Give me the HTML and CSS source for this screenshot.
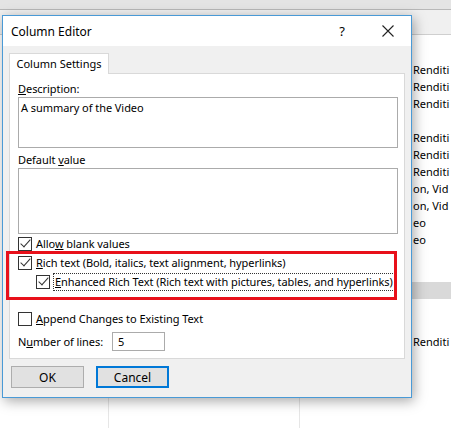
FILE: index.html
```html
<!DOCTYPE html>
<html lang="en">
<head>
    <meta charset="UTF-8">
    <title>Column Editor</title>
    <link rel="stylesheet" href="styles.css">
</head>
<body>
    <!-- list view behind the dialog -->
    <div class="app">
        <div class="ribbon"></div>
        <div class="header-row"></div>
        <div class="grid">
            <div class="col col-a"></div>
            <div class="col col-b"></div>
            <div class="col col-c">
                <div class="cell">Renditi</div>
                <div class="cell">Renditi</div>
                <div class="cell">Renditi</div>
                <div class="cell"></div>
                <div class="cell">Renditi</div>
                <div class="cell">Renditi</div>
                <div class="cell">Renditi</div>
                <div class="cell">on, Vid</div>
                <div class="cell">on, Vid</div>
                <div class="cell">eo</div>
                <div class="cell">eo</div>
                <div class="cell"></div>
                <div class="cell"></div>
                <div class="cell selected"></div>
                <div class="cell"></div>
                <div class="cell"></div>
                <div class="cell">Renditi</div>
            </div>
        </div>
    </div>

    <div class="dialog">
        <div class="titlebar">
            <span class="title">Column Editor</span>
            <span class="help">?</span>
            <svg class="close" width="12" height="12" viewBox="0 0 12 12">
                <path d="M0.5 0.5 L11.5 11.5 M11.5 0.5 L0.5 11.5" stroke="#222" stroke-width="1.1" fill="none"/>
            </svg>
        </div>
        <div class="body">
            <div class="tabs">
                <div class="tab">Column Settings</div>
            </div>
            <div class="panel">
                <label class="label"><u>D</u>escription:</label>
                <div class="textbox desc">A summary of the Video</div>
                <label class="label">Default <u>v</u>alue</label>
                <div class="textbox default"></div>

                <div class="check-row">
                    <span class="box checked"></span>
                    <span>Allo<u>w</u> blank values</span>
                </div>
                <div class="check-row">
                    <span class="box checked"></span>
                    <span><u>R</u>ich text (Bold, italics, text alignment, hyperlinks)</span>
                </div>
                <div class="check-row sub">
                    <span class="box checked"></span>
                    <span class="focused"><u>E</u>nhanced Rich Text (Rich text with pictures, tables, and hyperlinks)</span>
                </div>
                <div class="check-row append">
                    <span class="box"></span>
                    <span><u>A</u>ppend Changes to Existing Text</span>
                </div>
                <div class="lines-row">
                    <span>N<u>u</u>mber of lines:</span>
                    <div class="numbox">5</div>
                </div>
            </div>
            <div class="buttons">
                <button class="btn">OK</button>
                <button class="btn default">Cancel</button>
            </div>
        </div>
        <div class="highlight"></div>
    </div>
</body>
</html>
```

FILE: styles.css
```css
body {
    margin: 0;
    width: 451px;
    height: 428px;
    overflow: hidden;
    background: #fff;
    font-family: "Noto Sans", "Open Sans", sans-serif;
    font-size: 11px;
    color: #000;
    position: relative;
}

/* background list view */
.ribbon {
    height: 9px;
    background: #e4e4e4;
    border-bottom: 1px solid #b8b8b8;
}
.header-row {
    height: 24px;
    background: #f0f0f0;
    border-bottom: 1px solid #cfcfcf;
}
.grid {
    display: flex;
    height: 400px;
}
.col-a {
    width: 108px;
    border-right: 1px solid #e6e6e6;
}
.col-b {
    width: 190px;
    border-right: 1px solid #e6e6e6;
}
.col-c {
    flex: 1;
    padding-top: 26px;
    padding-left: 113px;
    white-space: nowrap;
    overflow: hidden;
}
.cell {
    height: 17px;
    line-height: 17px;
}
.cell.selected {
    background: #d9d9d9;
    margin-left: -2px;
}

/* dialog window */
.dialog {
    position: absolute;
    left: 2px;
    top: 15px;
    width: 408px;
    height: 381px;
    border: 1px solid #4a9ad6;
    background: #f0f0f0;
    box-shadow: 2px 3px 12px rgba(0, 0, 0, 0.35);
}
.titlebar {
    height: 30px;
    background: #fff;
    display: flex;
    align-items: center;
    padding-left: 8px;
}
.title {
    flex: 1;
    font-size: 12px;
}
.help {
    margin-right: 37px;
    font-size: 13px;
}
.close {
    margin-right: 17px;
}

.body {
    padding: 7px 6px 0 6px;
}
.tabs {
    display: flex;
}
.tab {
    width: 98px;
    height: 20px;
    line-height: 19px;
    text-align: center;
    background: #fff;
    border: 1px solid #d9d9d9;
    border-bottom: none;
    margin-bottom: -1px;
    position: relative;
    z-index: 1;
}
.panel {
    height: 278px;
    background: #fff;
    border: 1px solid #d9d9d9;
    padding: 6px 6px 0 8px;
    letter-spacing: -0.06px;
}
.label {
    display: block;
    height: 17px;
    line-height: 17px;
}
.textbox {
    border: 1px solid #ababab;
    padding: 2px 2px;
    line-height: 15px;
}
.desc {
    height: 45px;
    margin-bottom: 3px;
}
.default {
    height: 60px;
}

.check-row {
    display: flex;
    align-items: center;
    height: 19px;
    white-space: nowrap;
}
.check-row.sub {
    padding-left: 18px;
}
.check-row.append {
    margin-top: 18px;
}
.box {
    flex: none;
    width: 12px;
    height: 12px;
    border: 1px solid #333;
    background: #fff;
    margin-right: 4px;
    position: relative;
}
/* tick mark */
.box.checked::after {
    content: "";
    position: absolute;
    left: 4px;
    top: -1px;
    width: 4px;
    height: 9px;
    border-right: 1.3px solid #333;
    border-bottom: 1.3px solid #333;
    transform: rotate(42deg);
}
.focused {
    outline: 1px dotted #333;
    outline-offset: 0;
    padding: 0 1px;
    line-height: 16px;
}

.lines-row {
    display: flex;
    align-items: center;
    margin-top: 4px;
}
.lines-row span {
    width: 94px;
}
.numbox {
    width: 46px;
    height: 17px;
    border: 1px solid #ababab;
    padding-left: 5px;
    line-height: 17px;
}

.buttons {
    display: flex;
    gap: 12px;
    padding: 7px 0 0 2px;
}
.btn {
    width: 73px;
    height: 22px;
    font-family: inherit;
    font-size: 12px;
    background: #e1e1e1;
    border: 1px solid #adadad;
    padding: 0;
}
.btn.default {
    border: 2px solid #0078d7;
}

/* red callout drawn over the rich text options */
.highlight {
    position: absolute;
    left: 3px;
    top: 235px;
    width: 385px;
    height: 43px;
    border: 3px solid #e8101a;
}
```
